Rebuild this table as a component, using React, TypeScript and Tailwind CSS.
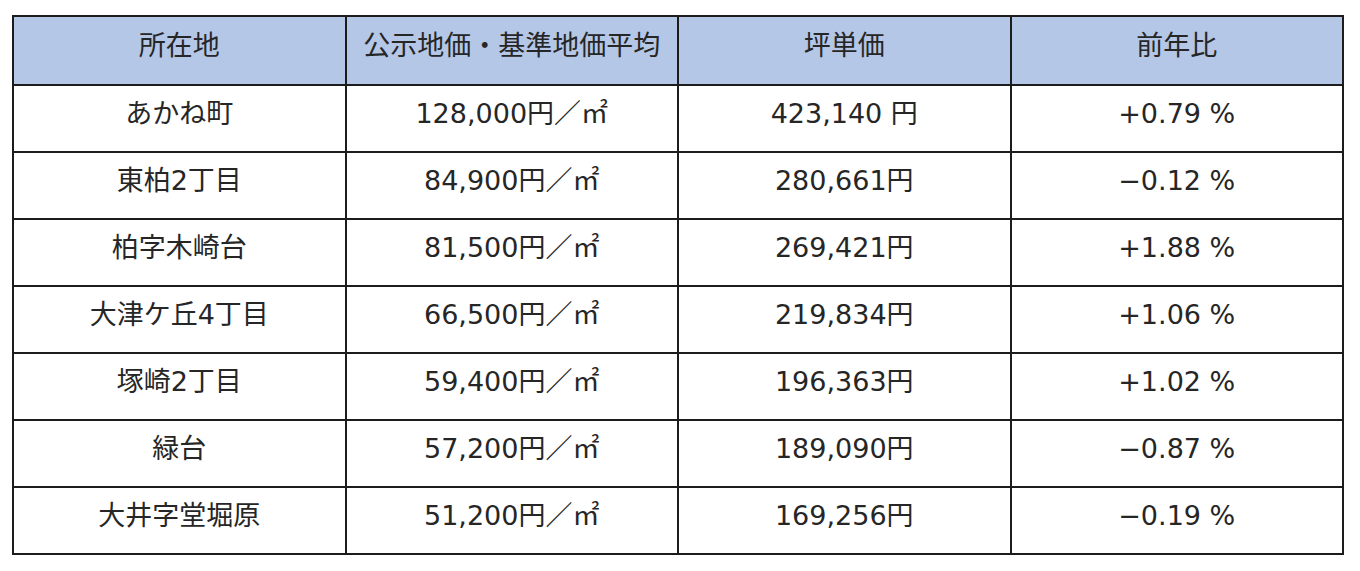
const rows = [
  ["あかね町", "128,000円／㎡", "423,140 円", "+0.79 %"],
  ["東柏2丁目", "84,900円／㎡", "280,661円", "−0.12 %"],
  ["柏字木崎台", "81,500円／㎡", "269,421円", "+1.88 %"],
  ["大津ケ丘4丁目", "66,500円／㎡", "219,834円", "+1.06 %"],
  ["塚崎2丁目", "59,400円／㎡", "196,363円", "+1.02 %"],
  ["緑台", "57,200円／㎡", "189,090円", "−0.87 %"],
  ["大井字堂堀原", "51,200円／㎡", "169,256円", "−0.19 %"],
];

const headers = ["所在地", "公示地価・基準地価平均", "坪単価", "前年比"];

export default function App() {
  return (
    <div className="w-[1360px] h-[571px] bg-white pt-[15px] pl-[12px] font-['DejaVu_Sans','Noto_Sans_CJK_JP',sans-serif] text-[#262626]">
      <table className="w-[1332px] border-collapse table-fixed border-2 border-[#1c1c1c]">
        <thead>
          <tr className="h-[69px] bg-[#b4c7e7]">
            {headers.map((h) => (
              <th
                key={h}
                className="border-2 border-[#1c1c1c] font-normal text-[27px] leading-none pb-[10px] text-center"
              >
                {h}
              </th>
            ))}
          </tr>
        </thead>
        <tbody>
          {rows.map((r) => (
            <tr key={r[0]} className="h-[67px]">
              {r.map((c, i) => (
                <td
                  key={i}
                  className="border-2 border-[#1c1c1c] text-[27px] leading-none pb-[10px] text-center"
                >
                  {c}
                </td>
              ))}
            </tr>
          ))}
        </tbody>
      </table>
    </div>
  );
}
